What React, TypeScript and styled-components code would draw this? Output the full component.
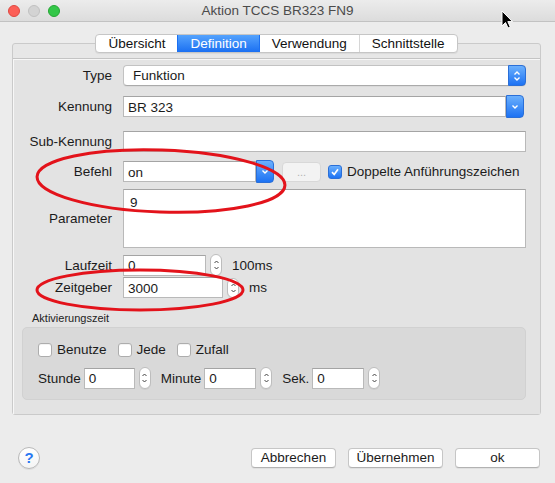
import React from 'react'
import styled, { createGlobalStyle, css } from 'styled-components'

const GlobalStyle = createGlobalStyle`
  html, body {
    margin: 0;
    padding: 0;
    background: #ececec;
  }
  body {
    font-family: 'Liberation Sans', Arial, sans-serif;
    font-size: 13.5px;
    color: #1b1b1b;
  }
  * { box-sizing: border-box; }
`

const blue = css`
  background: linear-gradient(#6bb0fd, #1d72f3);
  border: 1px solid #2a6fd8;
`

const Window = styled.div`
  position: relative;
  width: 555px;
  height: 483px;
  background: #ececec;
  overflow: hidden;
  display: flex;
  flex-direction: column;
`

const TitleBar = styled.div`
  height: 22px;
  flex: none;
  display: grid;
  grid-template-columns: 1fr auto 1fr;
  align-items: center;
  background: linear-gradient(#ececec, #dcdcdc);
  border-bottom: 1px solid #c2c2c2;
  border-radius: 5px 5px 0 0;
`

const Lights = styled.div`
  display: flex;
  gap: 8px;
  padding-left: 8px;
`

const Light = styled.span<{ $c: string; $b: string }>`
  width: 12px;
  height: 12px;
  border-radius: 50%;
  background: ${(p) => p.$c};
  border: 1px solid ${(p) => p.$b};
`

const Title = styled.div`
  font-size: 13.5px;
  color: #4b4b4b;
`

const Content = styled.div`
  flex: 1;
  display: flex;
  flex-direction: column;
  padding: 0 14px 0 12px;
`

const TabStrip = styled.div`
  align-self: center;
  margin-top: 12px;
  display: flex;
  height: 19px;
  position: relative;
  z-index: 1;
  background: #fff;
  border: 1px solid #c6c6c6;
  border-radius: 4px;
  box-shadow: 0 1px 1px rgba(0, 0, 0, 0.06);
  overflow: hidden;
`

const Tab = styled.div<{ $active?: boolean }>`
  padding: 0 12px;
  line-height: 17px;
  color: #111;
  & + & {
    border-left: 1px solid #d6d6d6;
  }
  ${(p) =>
    p.$active &&
    css`
      background: linear-gradient(#55a3fd, #1b70f2);
      color: #fff;
      border-left-color: #1b70f2 !important;
      & + * {
        border-left-color: #1b70f2 !important;
      }
    `}
`

const TabFrame = styled.div`
  margin-top: -10px;
  background: #e7e7e7;
  border: 1px solid #cacaca;
  border-radius: 3px;
  padding-top: 14px;
`

const TabBody = styled.div`
  background: #e3e3e3;
  border-top: 1px solid #c4c4c4;
  box-shadow: inset 1px 1px 0 #f7f7f7;
  padding: 6px 14px 14px 0;
`

const Row = styled.div<{ $top?: number }>`
  display: grid;
  grid-template-columns: 99px 1fr;
  column-gap: 11px;
  align-items: center;
  margin-top: ${(p) => p.$top ?? 0}px;
`

const Label = styled.div`
  text-align: right;
  white-space: nowrap;
`

const Inline = styled.div`
  display: flex;
  align-items: center;
`

const Popup = styled.div`
  height: 21px;
  display: flex;
  align-items: center;
  background: #fff;
  border: 1px solid #c2c2c2;
  border-bottom-color: #aaaaaa;
  border-radius: 4px;
  padding-left: 9px;
  box-shadow: 0 1px 0 rgba(0, 0, 0, 0.04);
`

const PopupText = styled.span`
  flex: 1;
`

const BlueButton = styled.div<{ $w?: number }>`
  ${blue};
  width: ${(p) => p.$w ?? 18}px;
  align-self: stretch;
  margin: -1px -1px -1px 0;
  border-radius: 0 4px 4px 0;
  display: flex;
  align-items: center;
  justify-content: center;
`

const Combo = styled.div<{ $w?: string }>`
  width: ${(p) => p.$w ?? '100%'};
  height: 21px;
  display: flex;
`

const Field = styled.div<{ $w?: number; $h?: number }>`
  ${(p) => (p.$w ? `width: ${p.$w}px;` : 'flex: 1;')}
  height: ${(p) => p.$h ?? 20}px;
  background: #fff;
  border: 1px solid #b9b9b9;
  border-top-color: #a4a4a4;
  padding: 0 4px;
  display: flex;
  align-items: center;
  line-height: 1;
  padding-top: 2px;
`

const TextArea = styled.div`
  height: 59px;
  background: #fff;
  border: 1px solid #b9b9b9;
  border-top-color: #a4a4a4;
  padding: 5px 6px;
`

const DotsButton = styled.div`
  width: 39px;
  height: 20px;
  margin-left: 9px;
  border-radius: 4px;
  border: 1px solid #d8d8d8;
  background: #f3f3f3;
  color: #b2b2b2;
  font-size: 11px;
  display: flex;
  align-items: center;
  justify-content: center;
`

const CheckBox = styled.span<{ $checked?: boolean }>`
  width: 14px;
  height: 14px;
  flex: none;
  border-radius: 3px;
  display: inline-flex;
  align-items: center;
  justify-content: center;
  ${(p) =>
    p.$checked
      ? blue
      : css`
          background: #fff;
          border: 1px solid #adadad;
          box-shadow: inset 0 1px 0 #f3f3f3;
        `}
`

const Check = styled.label<{ $gap?: number }>`
  display: inline-flex;
  align-items: center;
  gap: 5px;
  margin-left: ${(p) => p.$gap ?? 0}px;
`

const Stepper = styled.div<{ $gap?: number; $h?: number }>`
  width: 12px;
  height: ${(p) => p.$h ?? 22}px;
  margin-left: ${(p) => p.$gap ?? 4}px;
  border-radius: 6px;
  background: #fff;
  border: 1px solid #bdbdbd;
  box-shadow: 0 1px 0 rgba(0, 0, 0, 0.05);
  display: flex;
  align-items: center;
  justify-content: center;
`

const Unit = styled.span<{ $gap?: number }>`
  margin-left: ${(p) => p.$gap ?? 10}px;
`

const GroupLabel = styled.div`
  font-size: 11px;
  line-height: 13px;
  margin: 14px 0 2px 19px;
  color: #222;
`

const GroupBox = styled.div`
  margin: 0 0 0 9px;
  background: #d9d9d9;
  border: 1px solid #d1d1d1;
  border-radius: 5px;
  padding: 14px 15px 10px 15px;
`

const GroupRow = styled.div<{ $top?: number }>`
  display: flex;
  align-items: center;
  margin-top: ${(p) => p.$top ?? 0}px;
`

const SmallLabel = styled.span<{ $gap?: number }>`
  margin-left: ${(p) => p.$gap ?? 0}px;
  margin-right: 3px;
`

const Footer = styled.div`
  flex: 1;
  display: flex;
  align-items: center;
  padding: 17px 1px 0 6px;
`

const Help = styled.div`
  width: 22px;
  height: 22px;
  border-radius: 50%;
  background: linear-gradient(#ffffff, #f4f4f4);
  border: 1px solid #b9b9b9;
  color: #2a78f2;
  font-size: 15px;
  font-weight: bold;
  display: flex;
  align-items: center;
  justify-content: center;
  box-shadow: 0 1px 0 rgba(0, 0, 0, 0.06);
`

const Buttons = styled.div`
  margin-left: auto;
  display: flex;
  gap: 12px;
`

const PushButton = styled.div<{ $w: number }>`
  width: ${(p) => p.$w}px;
  height: 20px;
  background: #fff;
  border: 1px solid #c6c6c6;
  border-bottom-color: #b2b2b2;
  border-radius: 4px;
  display: flex;
  align-items: center;
  justify-content: center;
  box-shadow: 0 1px 0 rgba(0, 0, 0, 0.05);
`

const Overlay = styled.svg`
  position: absolute;
  left: 0;
  top: 0;
  pointer-events: none;
`

const Cursor = styled.svg`
  position: absolute;
  left: 501px;
  top: 10px;
  pointer-events: none;
`

const UpDown = () => (
  <svg width="8" height="12" viewBox="0 0 8 12">
    <path d="M1.5 4.5 L4 2 L6.5 4.5 M1.5 7.5 L4 10 L6.5 7.5" fill="none" stroke="#fff" strokeWidth="1.4" />
  </svg>
)

const Down = () => (
  <svg width="8" height="6" viewBox="0 0 8 6">
    <path d="M1.5 1.5 L4 4 L6.5 1.5" fill="none" stroke="#fff" strokeWidth="1.4" />
  </svg>
)

const Tick = () => (
  <svg width="10" height="10" viewBox="0 0 10 10">
    <path d="M2 5.2 L4.2 7.5 L8 2.2" fill="none" stroke="#fff" strokeWidth="1.7" />
  </svg>
)

const Spin = ({ gap, h }: { gap?: number; h?: number }) => (
  <Stepper $gap={gap} $h={h}>
    <svg width="7" height="14" viewBox="0 0 7 14">
      <path d="M1.5 5 L3.5 3 L5.5 5 M1.5 9 L3.5 11 L5.5 9" fill="none" stroke="#444" strokeWidth="1" />
    </svg>
  </Stepper>
)

export default function App() {
  return (
    <>
      <GlobalStyle />
      <Window>
        <TitleBar>
          <Lights>
            <Light $c="#fc5f57" $b="#df4841" />
            <Light $c="#d3d3d3" $b="#c1c1c1" />
            <Light $c="#33c748" $b="#25a634" />
          </Lights>
          <Title>Aktion TCCS BR323 FN9</Title>
          <div />
        </TitleBar>
        <Content>
          <TabStrip>
            <Tab>Übersicht</Tab>
            <Tab $active>Definition</Tab>
            <Tab>Verwendung</Tab>
            <Tab>Schnittstelle</Tab>
          </TabStrip>
          <TabFrame>
            <TabBody>
              <Row>
                <Label>Type</Label>
                <Popup>
                  <PopupText>Funktion</PopupText>
                  <BlueButton>
                    <UpDown />
                  </BlueButton>
                </Popup>
              </Row>
              <Row $top={10}>
                <Label>Kennung</Label>
                <Combo $w="calc(100% - 3px)">
                  <Field $h={21}>BR 323</Field>
                  <BlueButton>
                    <Down />
                  </BlueButton>
                </Combo>
              </Row>
              <Row $top={14}>
                <Label>Sub-Kennung</Label>
                <Field $h={21} />
              </Row>
              <Row $top={9}>
                <Label>Befehl</Label>
                <Inline>
                  <Combo $w="150px">
                    <Field $h={21}>on</Field>
                    <BlueButton>
                      <Down />
                    </BlueButton>
                  </Combo>
                  <DotsButton>...</DotsButton>
                  <Check $gap={7}>
                    <CheckBox $checked>
                      <Tick />
                    </CheckBox>
                    Doppelte Anführungszeichen
                  </Check>
                </Inline>
              </Row>
              <Row $top={7}>
                <Label>Parameter</Label>
                <TextArea>9</TextArea>
              </Row>
              <Row $top={6}>
                <Label>Laufzeit</Label>
                <Inline>
                  <Field $w={83} $h={21}>0</Field>
                  <Spin />
                  <Unit>100ms</Unit>
                </Inline>
              </Row>
              <Row $top={1}>
                <Label>Zeitgeber</Label>
                <Inline>
                  <Field $w={100} $h={21}>3000</Field>
                  <Spin gap={4} h={20} />
                  <Unit>ms</Unit>
                </Inline>
              </Row>
              <GroupLabel>Aktivierungszeit</GroupLabel>
              <GroupBox>
                <GroupRow>
                  <Check>
                    <CheckBox />
                    Benutze
                  </Check>
                  <Check $gap={11}>
                    <CheckBox />
                    Jede
                  </Check>
                  <Check $gap={11}>
                    <CheckBox />
                    Zufall
                  </Check>
                </GroupRow>
                <GroupRow $top={10}>
                  <SmallLabel>Stunde</SmallLabel>
                  <Field $w={51} $h={21}>0</Field>
                  <Spin />
                  <SmallLabel $gap={10}>Minute</SmallLabel>
                  <Field $w={52} $h={21}>0</Field>
                  <Spin />
                  <SmallLabel $gap={10}>Sek.</SmallLabel>
                  <Field $w={52} $h={21}>0</Field>
                  <Spin />
                </GroupRow>
              </GroupBox>
            </TabBody>
          </TabFrame>
          <Footer>
            <Help>?</Help>
            <Buttons>
              <PushButton $w={85}>Abbrechen</PushButton>
              <PushButton $w={95}>Übernehmen</PushButton>
              <PushButton $w={85}>ok</PushButton>
            </Buttons>
          </Footer>
        </Content>
        <Overlay width="555" height="483" viewBox="0 0 555 483">
          <ellipse cx="161" cy="181" rx="124" ry="31" transform="rotate(2 161 181)" fill="none" stroke="#e3131b" strokeWidth="3" />
          <ellipse cx="140" cy="290" rx="103" ry="20" fill="none" stroke="#e3131b" strokeWidth="3" />
        </Overlay>
        <Cursor width="14" height="20" viewBox="0 0 14 20">
          <path d="M1 1 L1 16 L4.5 12.5 L7 18 L9.3 17 L6.8 11.6 L11.5 11.6 Z" fill="#000" stroke="#fff" strokeWidth="1" />
        </Cursor>
      </Window>
    </>
  )
}
